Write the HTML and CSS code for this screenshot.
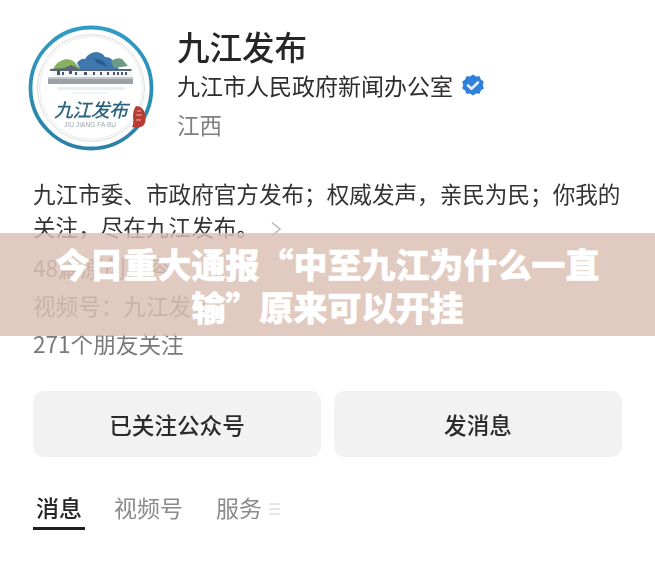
FILE: index.html
```html
<!DOCTYPE html>
<html lang="zh">
<head>
<meta charset="utf-8">
<title>九江发布</title>
<link rel="stylesheet" href="styles.css">
</head>
<body>
<main class="page">
  <header class="profile">
    <svg class="logo" viewBox="0 0 126 126" width="126" height="126" aria-label="九江发布">
      <defs>
        <linearGradient id="ring" x1="0" y1="0" x2="0" y2="1">
          <stop offset="0" stop-color="#2f9cc4"/>
          <stop offset="1" stop-color="#2c80a6"/>
        </linearGradient>
      </defs>
      <circle cx="63" cy="63" r="60.500" fill="#fff" stroke="url(#ring)" stroke-width="3.800"/>
      <circle cx="63" cy="63" r="53.500" fill="none" stroke="#d9dfdb" stroke-width="1"/>
      <circle cx="63" cy="63" r="51.500" fill="none" stroke="#e8ecea" stroke-width="1"/>
      <path d="M25 44q4-8 13-10 7 0 11 6l3 4z" fill="#86b25f"/>
      <path d="M49 38q4-5 8-4 4-7 12-7 6 1 8 5 6 0 9 5l5 7H52z" fill="#3e78ae"/>
      <path d="M66 33l9 3 5 6-11-4z" fill="#275a90"/>
      <path d="M83 36q6-4 11-2l6 7-14 2z" fill="#6c9a84"/>
      <path d="M22 44l14-1 7-3 9 4h52l-1 2H22z" fill="#5b6873"/>
      <rect x="24" y="46" width="80" height="6" fill="#f5f7f6"/>
      <g fill="#43566a">
        <rect x="29" y="46" width="3" height="4"/><rect x="34" y="47" width="2" height="3"/>
        <rect x="41" y="46" width="3" height="3"/><rect x="47" y="47" width="2" height="3"/>
        <rect x="56" y="47" width="3" height="3"/><rect x="65" y="47" width="2" height="3"/>
        <rect x="72" y="47" width="2" height="3"/><rect x="79" y="47" width="2" height="3"/>
        <rect x="85" y="47" width="2" height="3"/><rect x="89" y="47" width="2" height="3"/>
        <rect x="93" y="47" width="2" height="3"/><rect x="97" y="47" width="2" height="3"/>
      </g>
      <rect x="20" y="52" width="85" height="2" fill="#c3c8cb"/>
      <rect x="20" y="54" width="85" height="5" fill="#9aa2a8"/>
      <rect x="29" y="62" width="68" height="3" rx="1.500" fill="#e6eff3"/>
      <rect x="44" y="67" width="36" height="2" rx="1" fill="#eef3f5"/>
      <text class="logo-script" x="26" y="92" textLength="74">九江发布</text>
      <text class="logo-latin" x="36" y="102" textLength="52">JIU JIANG FA BU</text>
      <path d="M108 81q7 0 9 8 2 8-2 12-6 3-11 1 2-4 1-10 0-7 3-11z" fill="#b93c34"/>
      <path d="M109 86h4M108 90h6M108 95h5" stroke="#e9b5ae" stroke-width="1" fill="none"/>
    </svg>
    <div class="identity">
      <h1 class="name">九江发布</h1>
      <p class="org">九江市人民政府新闻办公室
        <svg class="badge" viewBox="0 0 24 24" width="24" height="24" aria-hidden="true">
          <path d="M12 1.500l3 2 3.600-.3 1.200 3.400 3 2-1 3.400 1 3.400-3 2-1.200 3.400-3.600-.3-3 2-3-2-3.600.3-1.200-3.400-3-2 1-3.400-1-3.400 3-2 1.200-3.400 3.600.3z" fill="#2f7fdc"/>
          <path d="M7 12.500l3.500 3.200L17 9.500" fill="none" stroke="#e6f0fb" stroke-width="2.600" stroke-linecap="round" stroke-linejoin="round"/>
        </svg>
      </p>
      <p class="region">江西</p>
    </div>
  </header>

  <section class="about">
    <p class="bio">九江市委、市政府官方发布；权威发声，亲民为民；你我的<br>关注，尽在九江发布。<svg class="chevron" viewBox="0 0 12 16" width="12" height="16" aria-hidden="true">
        <path d="M2 1.500l8 6.500-8 6.500" fill="none" stroke="#b9b9b9" stroke-width="1.500"/>
      </svg></p>
    <p class="meta first">48篇原创内容</p>
    <p class="meta">视频号：九江发布</p>
    <p class="meta">271个朋友关注</p>
  </section>

  <div class="actions">
    <button class="action" type="button">已关注公众号</button>
    <button class="action" type="button">发消息</button>
  </div>

  <nav class="tabs">
    <span class="tab active">消息</span>
    <span class="tab">视频号</span>
    <span class="tab">服务</span>
    <span class="more" aria-hidden="true"><i></i><i></i><i></i></span>
  </nav>
</main>

<div class="banner">今日重大通报“中至九江为什么一直输”原来可以开挂</div>
</body>
</html>
```
FILE: styles.css
```css
* { box-sizing: border-box; }

html, body {
  margin: 0;
  height: 571px;
  overflow: hidden;
  background: #fff;
}

body {
  position: relative;
  font-family: "Noto Sans CJK SC", "Noto Sans", sans-serif;
}

p, h1 { margin: 0; font-weight: 400; }

.page {
  padding: 25px 33px 0;
  filter: blur(0.45px);
}

.profile {
  display: flex;
  align-items: flex-start;
  gap: 23px;
  margin-left: -5px;
}

.logo { flex: none; }
.logo-script { font-size: 19px; font-style: italic; font-weight: 500; fill: #2d6480; }
.logo-latin { font-size: 6.5px; fill: #9aa5ab; font-family: "Liberation Sans", sans-serif; }

.identity { margin-top: -3px; }

.name {
  font-size: 32.5px;
  line-height: 48px;
  font-weight: 500;
  color: #262626;
}

.org {
  display: flex;
  align-items: center;
  gap: 8px;
  margin-top: 1px;
  font-size: 23px;
  line-height: 28px;
  color: #2e2e2e;
}

.region {
  margin-top: 8px;
  font-size: 22.5px;
  line-height: 34px;
  color: #7f7f7f;
}

.about { margin-top: 26px; }

.bio {
  font-size: 22.6px;
  line-height: 33px;
  color: #333;
}

.chevron { margin-left: 11px; vertical-align: -1px; }

.meta {
  font-size: 22.6px;
  line-height: 38px;
  color: #7a7a7a;
}

.meta.first { margin-top: 6px; }

.actions {
  display: grid;
  grid-template-columns: 288px 288px;
  gap: 13px;
  margin-top: 28px;
}

.action {
  height: 66px;
  border: 0;
  border-radius: 10px;
  background: #f2f2f2;
  font: 500 22.6px "Noto Sans CJK SC", sans-serif;
  color: #2b2b2b;
}

.tabs {
  display: flex;
  align-items: flex-start;
  margin-top: 31px;
}

.tab {
  margin-right: 33px;
  font-size: 23px;
  line-height: 39px;
  color: #8b8b8b;
}

.tab.active {
  padding: 0 3px;
  border-bottom: 3px solid #1f1f1f;
  font-weight: 500;
  color: #262626;
  margin-right: 29px;
}

.more {
  display: flex;
  flex-direction: column;
  gap: 3px;
  width: 11px;
  margin: 15px 0 0 -26px;
}

.more i { height: 2px; background: #e6e6e6; }

.banner {
  position: absolute;
  left: 0;
  right: 0;
  top: 233px;
  height: 103px;
  padding: 9px 50px 0;
  background: rgba(219, 190, 177, 0.82);
  font-size: 34px;
  line-height: 43px;
  font-weight: 900;
  text-align: center;
  color: #fff;
  -webkit-text-stroke: 0.5px #fff;
}
```
